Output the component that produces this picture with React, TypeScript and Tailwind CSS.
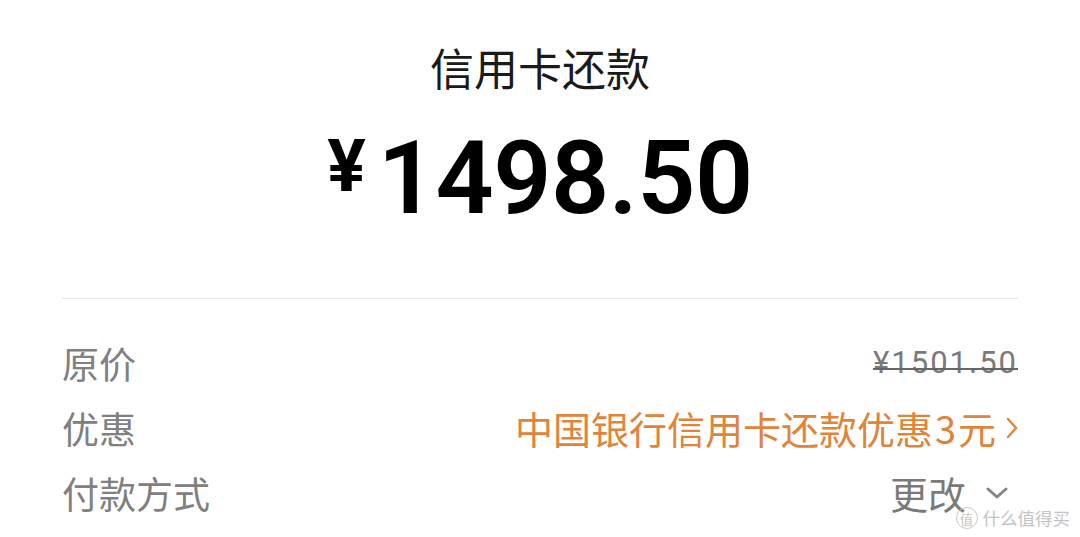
import React from 'react';

const CJK = "font-['Noto_Sans_CJK_SC','Noto_Sans',sans-serif]";
const NUM = "font-['Roboto','Noto_Sans_CJK_SC',sans-serif]";

function ChevronRight() {
  return (
    <svg width="12" height="22" viewBox="0 0 12 22" fill="none" className="ml-[10px] shrink-0">
      <path d="M2 2 L10 11 L2 20" stroke="#e0843a" strokeWidth="2.4" strokeLinecap="round" strokeLinejoin="round" />
    </svg>
  );
}

function ChevronDown() {
  return (
    <svg width="22" height="12" viewBox="0 0 22 12" fill="none" className="ml-[20px] mr-[10px] shrink-0">
      <path d="M2 2 L11 10 L20 2" stroke="#858585" strokeWidth="3" strokeLinecap="round" strokeLinejoin="round" />
    </svg>
  );
}

function Row({ label, children }: { label: string; children: React.ReactNode }) {
  return (
    <div className="h-[65px] flex items-center justify-between">
      <span className="text-[37px] leading-[38px] text-[#808080]">{label}</span>
      <div className="flex items-center">{children}</div>
    </div>
  );
}

export default function App() {
  return (
    <div className={`relative w-[1080px] h-[537px] bg-white overflow-hidden ${CJK}`}>
      {/* header: title + amount */}
      <h1 className="pt-[45px] text-center text-[44px] leading-[44px] text-[#1a1a1a] font-normal">信用卡还款</h1>
      <div className={`mt-[38px] flex justify-center items-start text-black ${NUM}`}>
        <span className="mt-[4px] text-[72px] leading-none font-bold">¥</span>
        <span className="ml-[12px] text-[102px] leading-none font-semibold tracking-[-0.5px]">1498.50</span>
      </div>

      <div className="mx-[62px] mt-[69px] h-px bg-[#e6e6e6]" />

      {/* detail rows */}
      <div className="mx-[62px] mt-[31px] flex flex-col">
        <Row label="原价">
          <span className={`relative text-[31px] leading-none tracking-[2px] text-[#7a7a7a] ${NUM}`}>
            ¥1501.50
            <span className="absolute left-0 right-0 top-[21px] h-[2px] bg-[#666666]" />
          </span>
        </Row>
        <Row label="优惠">
          <span className="text-[38px] leading-[38px] text-[#e0843a]">
            中国银行信用卡还款优惠<span className="px-[2px]">3</span>元
          </span>
          <ChevronRight />
        </Row>
        <Row label="付款方式">
          <span className="text-[38px] leading-[38px] text-[#7a7a7a]">更改</span>
          <ChevronDown />
        </Row>
      </div>

      {/* site watermark */}
      <div className="absolute right-[10px] bottom-[8px] flex items-center gap-[5px] text-[#c4c4c4]">
        <span className="w-[22px] h-[22px] rounded-full border border-[#c8c8c8] flex items-center justify-center text-[13px] leading-none">值</span>
        <span className="text-[17.5px] leading-none">什么值得买</span>
      </div>
    </div>
  );
}
